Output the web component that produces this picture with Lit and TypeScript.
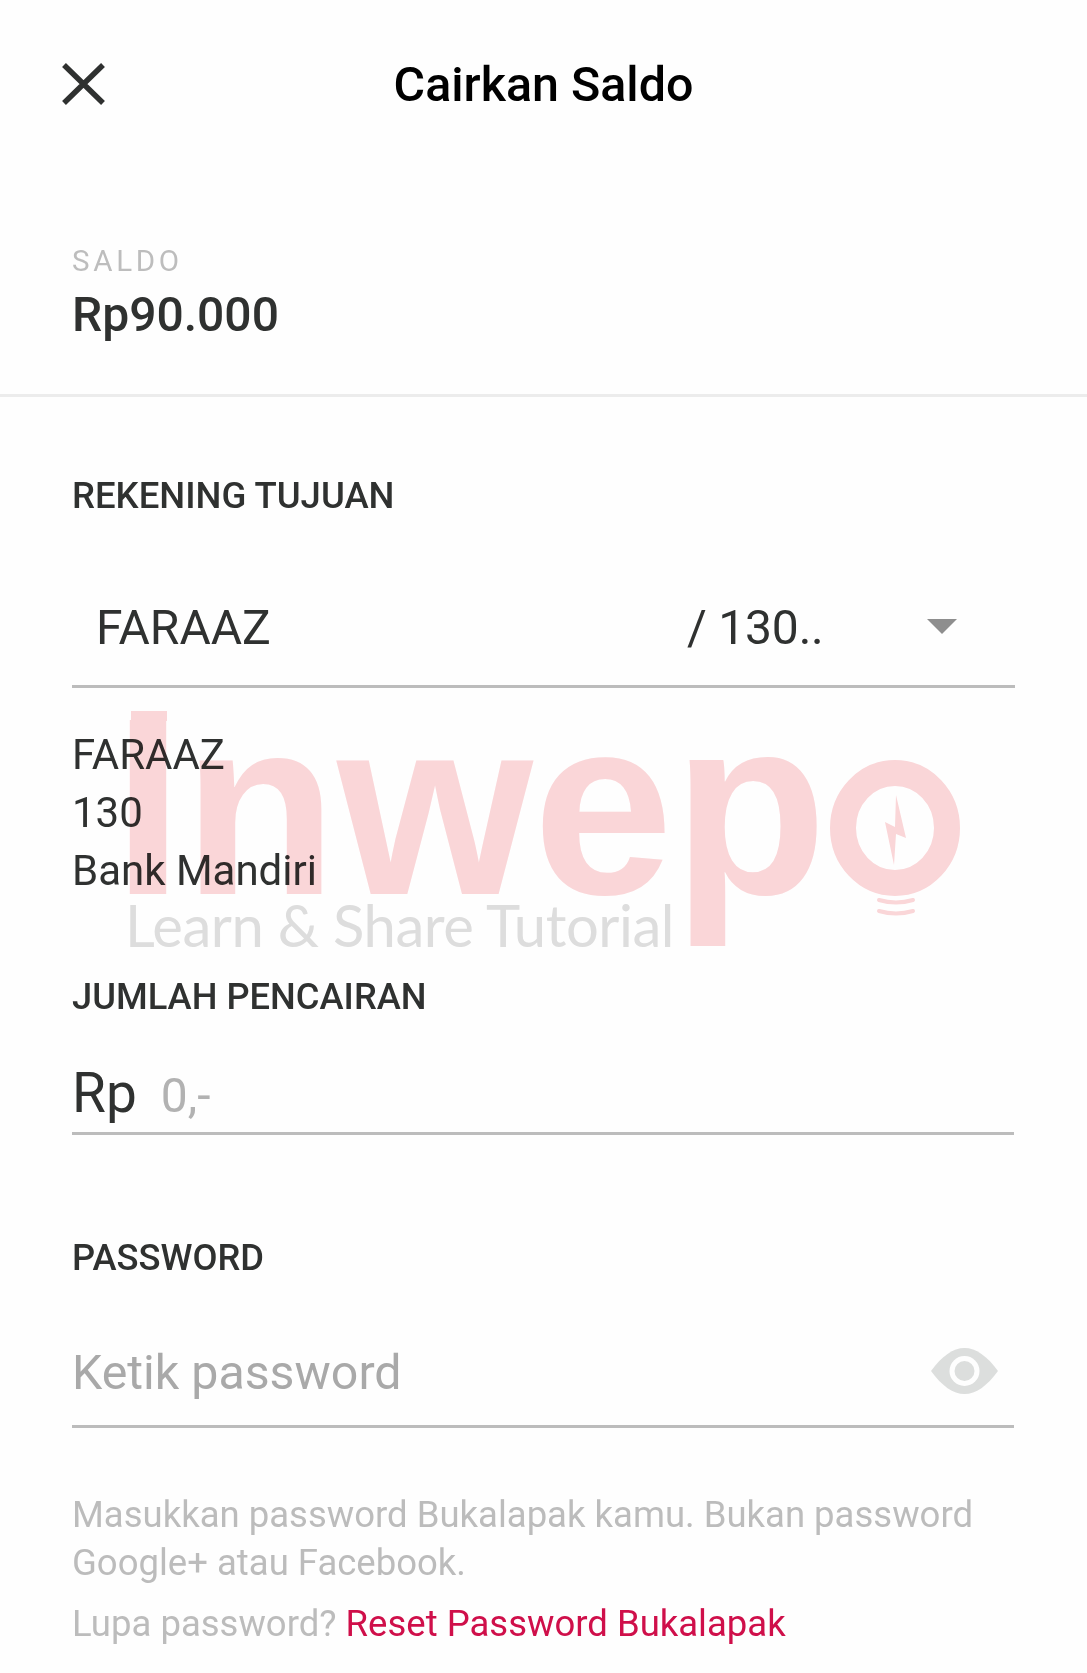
import { LitElement, html, css } from "lit";
import { customElement } from "lit/decorators.js";

@customElement("app-root")
export class AppRoot extends LitElement {
  static styles = css`
    :host { display: block; position: relative; width: 1087px; height: 1673px; overflow: hidden; background: #fefefe; font-family: Roboto, "Liberation Sans", sans-serif; color: #2f3130; }
    .header { display: grid; grid-template-columns: 1fr auto 1fr; align-items: center; height: 168px; padding: 0 62px; }
    .close { width: 43px; height: 42px; display: block; }
    .title { font-size: 48.4px; font-weight: 500; color: #000; line-height: 56px; padding-top: 2px; }
    .balance { height: 229px; box-sizing: border-box; padding: 76px 72px 0; border-bottom: 3px solid #ececec; }
    .balance-label { font-size: 29.5px; letter-spacing: 3.7px; color: #bdbdbd; line-height: 34px; }
    .balance-value { font-size: 48px; font-weight: 500; line-height: 56px; margin-top: 9px; }
    .form { padding: 0 72px; }
    .label { font-size: 36.3px; font-weight: 500; line-height: 42px; color: #2f3130; }
    .rek { margin-top: 78px; font-size: 36.5px; }
    .select { display: flex; align-items: center; height: 132px; margin-top: 39px; padding-left: 24px; box-sizing: border-box; padding-top: 14px; font-size: 48px; border-bottom: 3px solid #bcbcbc; }
    .select .name { width: 591px; }
    .select .no { width: 240px; letter-spacing: -0.2px; }
    .arrow { width: 30px; height: 15px; display: block; margin-top: -2px; }
    .acct { margin-top: 38px; font-size: 42px; line-height: 58px; color: #2f3130; }
    .jml { margin-top: 76px; }
    .amount { display: flex; align-items: baseline; height: 94px; padding-top: 7px; margin-right: 1px; border-bottom: 3px solid #bcbcbc; margin-top: 23px; box-sizing: border-box; }
    .amount .rp { font-size: 55px; line-height: 90px; margin-right: 24px; }
    .amount .zero { font-size: 48px; color: #b2b2b2; }
    .pw { margin-top: 102px; }
    .pass { display: flex; align-items: center; justify-content: space-between; height: 123px; margin-top: 26px; margin-right: 1px; padding-right: 16px; padding-top: 15px; border-bottom: 3px solid #bcbcbc; box-sizing: border-box; font-size: 48.3px; color: #a9a9a9; }
    .eye { width: 67px; height: 46px; display: block; margin-top: -4px; }
    .help { margin-top: 63px; font-size: 36.5px; line-height: 48px; color: #bcbcbc; }
    .help2 { margin-top: 13px; font-size: 36.5px; line-height: 48px; color: #bcbcbc; }
    .link { color: #cf0f4a; }
    .wm { position: absolute; left: 0; top: 0; width: 1087px; height: 1000px; pointer-events: none; mix-blend-mode: multiply; }
    .wm-word { position: absolute; left: 113px; top: 662px; font-family: "Liberation Sans", sans-serif; font-weight: 700; font-size: 252px; line-height: 290px; color: #fbd7d9; white-space: nowrap; }
    .wm-cap { position: absolute; left: 131px; top: 711px; width: 36px; height: 10px; background: #fbd7d9; }
    .wm-sub { position: absolute; left: 125px; top: 885px; font-family: Lato, sans-serif; font-weight: 400; font-size: 58px; letter-spacing: -0.45px; line-height: 80px; color: #dedede; white-space: nowrap; }
    .wm-bulb { position: absolute; left: 830px; top: 755px; width: 132px; height: 165px; }
  `;

  render() {
    return html`
      <div class="header">
        <svg class="close" viewBox="0 0 43 42" fill="none" stroke="#2f3130" stroke-width="5.5"><path d="M2 2 L41 40 M41 2 L2 40"/></svg>
        <div class="title">Cairkan Saldo</div>
        <div></div>
      </div>
      <div class="balance">
        <div class="balance-label">SALDO</div>
        <div class="balance-value">Rp90.000</div>
      </div>
      <div class="form">
        <div class="label rek">REKENING TUJUAN</div>
        <div class="select">
          <span class="name">FARAAZ</span><span class="no">/ 130..</span>
          <svg class="arrow" viewBox="0 0 30 15"><path d="M0 0H30L15 15Z" fill="#8e8e8e"/></svg>
        </div>
        <div class="acct">FARAAZ<br />130<br />Bank Mandiri</div>
        <div class="label jml">JUMLAH PENCAIRAN</div>
        <div class="amount"><span class="rp">Rp</span><span class="zero">0,-</span></div>
        <div class="label pw">PASSWORD</div>
        <div class="pass">
          <span>Ketik password</span>
          <svg class="eye" viewBox="0 0 67 46">
            <path d="M0 23C11 8 22 0 33.5 0S56 8 67 23C56 38 45 46 33.5 46S11 38 0 23Z" fill="#dcdedd"/>
            <circle cx="33.5" cy="23" r="15" fill="#fefefe"/>
            <circle cx="33.5" cy="23" r="10" fill="#dcdedd"/>
          </svg>
        </div>
        <div class="help">Masukkan password Bukalapak kamu. Bukan password<br />Google+ atau Facebook.</div>
        <div class="help2">Lupa password? <span class="link">Reset Password Bukalapak</span></div>
      </div>
      <div class="wm">
        <div class="wm-cap"></div>
        <div class="wm-word">Inwep</div>
        <div class="wm-sub">Learn &amp; Share Tutorial</div>
        <svg class="wm-bulb" viewBox="0 0 132 165">
          <ellipse cx="65" cy="73" rx="52" ry="55" fill="none" stroke="#fbd7d9" stroke-width="26"/>
          <path d="M66 40 L76 83 L66 79 L64 110 L55 67 L65 72Z" fill="#fbd7d9"/>
          <path d="M49 145Q66 150 83 145M49 156Q66 161 83 156" fill="none" stroke="#fbd7d9" stroke-width="4" stroke-linecap="round"/>
        </svg>
      </div>
    `;
  }
}
